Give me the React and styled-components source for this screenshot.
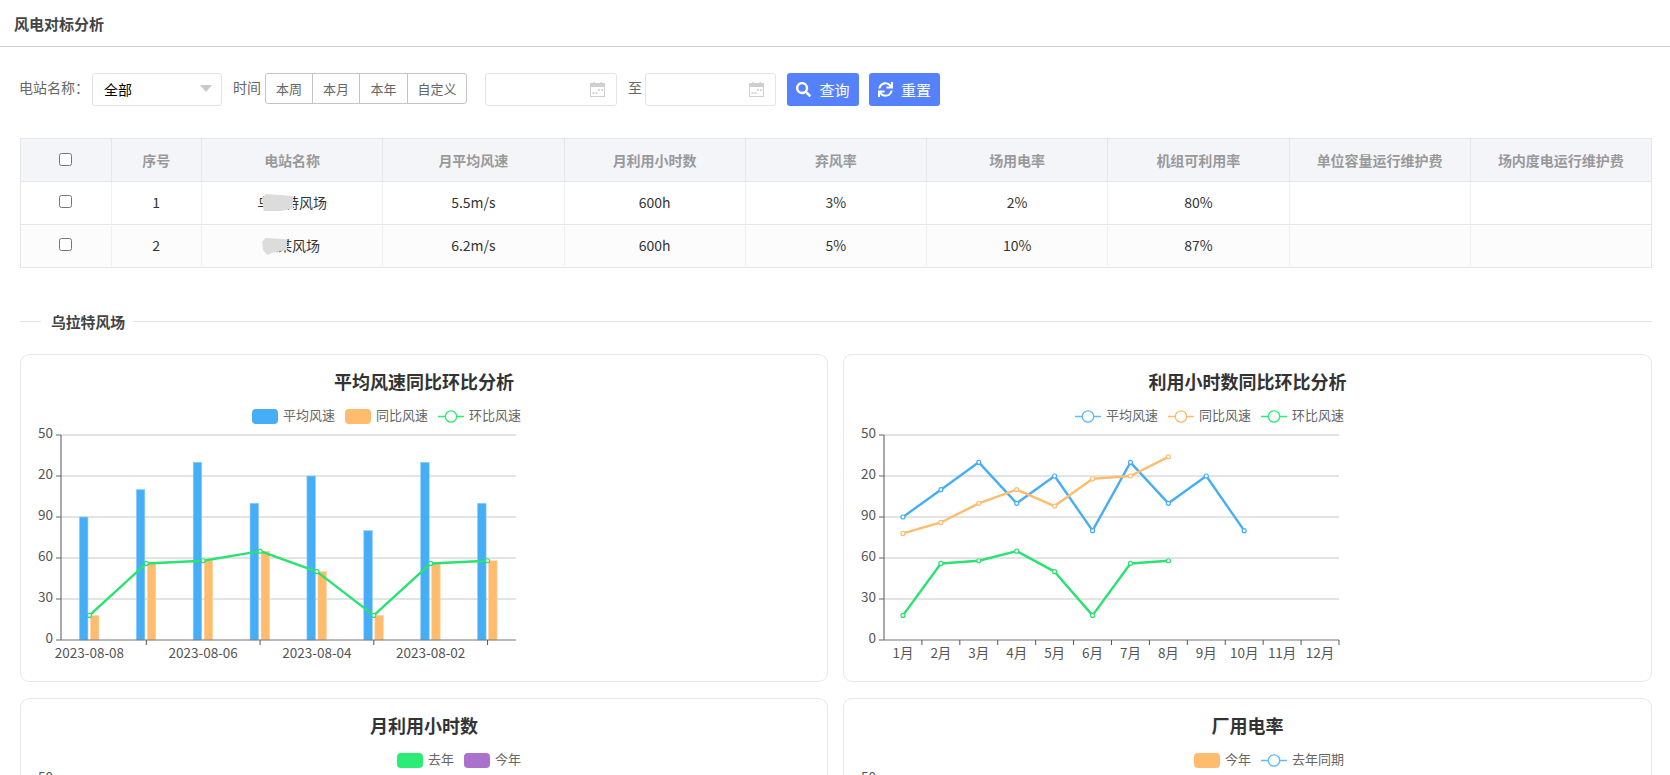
import React from "react";
import styled, { createGlobalStyle } from "styled-components";
import { FaSearch, FaSync } from "react-icons/fa";

const GlobalStyle = createGlobalStyle`
  html, body {
    margin: 0;
    padding: 0;
    height: 100%;
    overflow: hidden;
    background: #fff;
  }
  body {
    font-family: "Noto Sans CJK SC", "Noto Sans", sans-serif;
    color: #333;
  }
  * { box-sizing: border-box; }
`;

const Page = styled.div`
  width: 1670px;
  height: 775px;
  overflow: hidden;
`;

const Header = styled.div`
  height: 47px;
  padding-left: 14px;
  border-bottom: 1px solid #ccc;
  font-size: 15px;
  font-weight: 700;
  line-height: 48px;
  color: #444;
`;

const Content = styled.div`
  padding: 26px 18px 0 20px;
`;

const Filter = styled.div`
  display: flex;
  align-items: flex-start;
  height: 33px;
`;

const FilterLabel = styled.span`
  font-size: 14px;
  line-height: 28px;
  color: #666;
  margin-left: ${(p) => p.$left || 0}px;
  width: ${(p) => p.$width}px;
  flex: none;
`;

const Select = styled.div`
  width: 130px;
  height: 33px;
  padding: 0 9px 2px 11px;
  display: flex;
  align-items: center;
  justify-content: space-between;
  border: 1px solid #e4e4e4;
  border-radius: 3px;
  font-size: 14px;
  color: #000;
  flex: none;
`;

const Caret = styled.i`
  border-left: 6px solid transparent;
  border-right: 6px solid transparent;
  border-top: 7px solid #c8c8c8;
`;

const RangeGroup = styled.div`
  display: flex;
  height: 31px;
  border: 1px solid #c4c4c4;
  border-radius: 3px;
  flex: none;
`;

const RangeItem = styled.div`
  width: ${(p) => p.$width}px;
  text-align: center;
  font-size: 13px;
  line-height: 29px;
  color: #666;
  & + & {
    border-left: 1px solid #c4c4c4;
  }
`;

const DateBox = styled.div`
  width: ${(p) => p.$width}px;
  height: 33px;
  margin-left: ${(p) => p.$left || 0}px;
  padding-right: 11px;
  display: flex;
  align-items: center;
  justify-content: flex-end;
  border: 1px solid #e4e4e4;
  border-radius: 3px;
  flex: none;
`;

const ActionButton = styled.button`
  width: ${(p) => p.$width}px;
  height: 33px;
  margin-left: ${(p) => p.$left}px;
  display: flex;
  align-items: center;
  justify-content: center;
  gap: 8px;
  border: none;
  border-radius: 3px;
  background: #5582fc;
  color: #fff;
  font-family: inherit;
  font-size: 15px;
  padding: 0;
  flex: none;
  svg {
    font-size: 15px;
  }
`;

const Table = styled.table`
  width: 1632px;
  margin-top: 32px;
  table-layout: fixed;
  border-collapse: collapse;
  font-size: 14px;
`;

const HeadCell = styled.th`
  width: ${(p) => (p.$narrow ? "90.5px" : "auto")};
  height: 43px;
  padding: 0;
  background: #f4f5f9;
  border: 1px solid #e6e6e6;
  font-weight: 700;
  color: #999;
`;

const Row = styled.tr`
  background: ${(p) => (p.$alt ? "#fcfcfc" : "#fff")};
  border-top: 1px solid #e6e6e6;
  border-bottom: 1px solid #e6e6e6;
`;

const Cell = styled.td`
  height: 43px;
  padding: 0 0 2px;
  text-align: center;
  color: #333;
  border-left: 1px solid #f0f0f0;
  border-right: 1px solid #f0f0f0;
  &:first-child {
    border-left: 1px solid #e6e6e6;
  }
  &:last-child {
    border-right: 1px solid #e6e6e6;
  }
`;

const Check = styled.input.attrs({ type: "checkbox" })`
  margin: 0 0 4px;
  vertical-align: middle;
`;

const StationName = styled.span`
  position: relative;
  display: inline-block;
`;

const Smudge = styled.i`
  position: absolute;
  left: ${(p) => p.$left}px;
  top: ${(p) => p.$top}px;
  width: ${(p) => p.$width}px;
  height: ${(p) => p.$height}px;
  background: #dcdcdc;
  clip-path: ${(p) => p.$shape};
`;

const Section = styled.div`
  display: flex;
  align-items: center;
  margin-top: 43px;
  height: 20px;
  font-size: 14.8px;
  font-weight: 700;
  color: #444;
  &::before,
  &::after {
    content: "";
    height: 1px;
    background: #e4e4e4;
  }
  &::before {
    width: 21px;
    margin-right: 10px;
  }
  &::after {
    flex: 1;
    margin-left: 8px;
  }
`;

const ChartGrid = styled.div`
  display: grid;
  grid-template-columns: 808px 809px;
  gap: 16px 15px;
  margin-top: 23px;
`;

const Card = styled.div`
  height: 328px;
  border: 1px solid #e8e8e8;
  border-radius: 9px;
  overflow: hidden;
`;

const CardTitle = styled.div`
  height: 54px;
  line-height: 53px;
  text-align: center;
  font-size: 18px;
  font-weight: 700;
  color: #333;
`;

const Legend = styled.div`
  width: 500px;
  height: 15px;
  display: flex;
  justify-content: flex-end;
  align-items: center;
  gap: 10px;
`;

const LegendItem = styled.div`
  display: flex;
  align-items: center;
  gap: 5px;
  font-size: 13px;
  color: #666;
`;

const LegendText = styled.span`
  margin-bottom: 4px;
`;

const Swatch = styled.i`
  width: 26px;
  height: 15px;
  border-radius: 4px;
  background: ${(p) => p.$color};
`;

const PlotSvg = styled.svg`
  display: block;
  margin-top: -14px;
`;

const AxisText = styled.text`
  font-size: 13.5px;
  fill: #555;
`;

const CalendarIcon = () => (
  <svg width="15" height="15" viewBox="0 0 15 15">
    <rect x="0.5" y="1.5" width="14" height="13" fill="#fff" stroke="#cfcfcf" />
    <rect x="0.5" y="1.5" width="14" height="3.5" fill="#cfcfcf" />
    <rect x="3" y="0" width="1.5" height="3" fill="#cfcfcf" />
    <rect x="10.5" y="0" width="1.5" height="3" fill="#cfcfcf" />
    <rect x="8" y="7" width="2" height="2" fill="#d8d8d8" />
    <rect x="11" y="7" width="2" height="2" fill="#d8d8d8" />
    <rect x="2.5" y="10" width="2" height="2" fill="#d8d8d8" />
    <rect x="5.5" y="10" width="2" height="2" fill="#d8d8d8" />
  </svg>
);

const LineIcon = ({ color }) => (
  <svg width="26" height="15" viewBox="0 0 26 15">
    <line x1="0" y1="7.5" x2="26" y2="7.5" stroke={color} strokeWidth="1.5" />
    <circle cx="13" cy="7.5" r="5.7" fill="#fff" stroke={color} strokeWidth="1.3" />
  </svg>
);

const BLUE = "#46aef7";
const ORANGE = "#ffbc6e";
const GREEN = "#27e36f";
const MINT = "#2bed76";
const PURPLE = "#ab72cd";

const yTicks = [
  { label: "50", v: 150 },
  { label: "20", v: 120 },
  { label: "90", v: 90 },
  { label: "60", v: 60 },
  { label: "30", v: 30 },
  { label: "0", v: 0 },
];

const AXIS_X = 40;
const BASE_Y = 230;
const toY = (v) => BASE_Y - v * (205 / 150);

const Plot = ({ width, labels, shown, ticks, bars, lines }) => {
  const band = width / labels.length;
  const cx = (i) => AXIS_X + band * (i + 0.5);
  return (
    <PlotSvg width="560" height="264" viewBox="0 0 560 264">
      {yTicks.map((t) => (
        <g key={t.label}>
          <line x1={AXIS_X - 5} x2={AXIS_X} y1={toY(t.v)} y2={toY(t.v)} stroke="#666" />
          {t.v > 0 && (
            <line x1={AXIS_X} x2={AXIS_X + width} y1={toY(t.v)} y2={toY(t.v)} stroke="#c8c8c8" />
          )}
          <AxisText x={AXIS_X - 8} y={toY(t.v) + 3} textAnchor="end">
            {t.label}
          </AxisText>
        </g>
      ))}
      {bars &&
        bars.map((s, k) =>
          s.data.map((v, i) => (
            <rect
              key={`${k}-${i}`}
              x={cx(i) + (k === 0 ? -10 : 1)}
              y={toY(v)}
              width="8.5"
              height={BASE_Y - toY(v)}
              fill={s.color}
              stroke={s.edge}
              strokeWidth="0.6"
            />
          ))
        )}
      <line x1={AXIS_X} x2={AXIS_X} y1={toY(150)} y2={BASE_Y} stroke="#555" />
      <line x1={AXIS_X} x2={AXIS_X + width} y1={BASE_Y} y2={BASE_Y} stroke="#777" strokeWidth="1.2" />
      {ticks.map((t) => (
        <line key={t} x1={AXIS_X + band * t} x2={AXIS_X + band * t} y1={BASE_Y} y2={BASE_Y + 5} stroke="#555" />
      ))}
      {labels.map((l, i) =>
        shown(i) ? (
          <AxisText key={l} x={cx(i)} y={BASE_Y + 18} textAnchor="middle">
            {l}
          </AxisText>
        ) : null
      )}
      {lines.map((s) => (
        <g key={s.color}>
          <polyline
            points={s.data.map((v, i) => `${cx(i)},${toY(v)}`).join(" ")}
            fill="none"
            stroke={s.color}
            strokeWidth="2.4"
            strokeLinejoin="round"
          />
          {s.data.map((v, i) => (
            <circle key={i} cx={cx(i)} cy={toY(v)} r="2" fill="#fff" stroke={s.color} strokeWidth="1.2" />
          ))}
        </g>
      ))}
    </PlotSvg>
  );
};

const EmptyPlot = () => (
  <PlotSvg width="560" height="40" viewBox="0 0 560 40">
    <AxisText x={AXIS_X - 8} y="28" textAnchor="end">
      50
    </AxisText>
  </PlotSvg>
);

const windA = [90, 110, 130, 100, 120, 80, 130, 100];
const windB = [18, 56, 58, 65, 50, 18, 56, 58];
const dates = ["2023-08-08", "2023-08-07", "2023-08-06", "2023-08-05", "2023-08-04", "2023-08-03", "2023-08-02", "2023-08-01"];
const months = ["1月", "2月", "3月", "4月", "5月", "6月", "7月", "8月", "9月", "10月", "11月", "12月"];

const columns = ["序号", "电站名称", "月平均风速", "月利用小时数", "弃风率", "场用电率", "机组可利用率", "单位容量运行维护费", "场内度电运行维护费"];

const rows = [
  {
    id: 1,
    name: "乌拉特风场",
    smudge: { left: 5, top: 2, width: 31, height: 17, shape: "polygon(0 25%, 12% 0, 100% 12%, 100% 85%, 60% 100%, 5% 100%)" },
    vals: ["5.5m/s", "600h", "3%", "2%", "80%"],
  },
  {
    id: 2,
    name: "某某风场",
    smudge: { left: -2, top: 3, width: 25, height: 17, shape: "polygon(0 20%, 15% 0, 100% 8%, 100% 70%, 45% 85%, 20% 100%, 4% 70%)" },
    vals: ["6.2m/s", "600h", "5%", "10%", "87%"],
  },
];

const App = () => {
  return (
    <Page>
      <GlobalStyle />
      <Header>风电对标分析</Header>
      <Content>
        <Filter>
          <FilterLabel $left={-1} $width={73}>电站名称：</FilterLabel>
          <Select>
            全部
            <Caret />
          </Select>
          <FilterLabel $left={11} $width={32}>时间</FilterLabel>
          <RangeGroup>
            <RangeItem $width={46}>本周</RangeItem>
            <RangeItem $width={47}>本月</RangeItem>
            <RangeItem $width={48}>本年</RangeItem>
            <RangeItem $width={59}>自定义</RangeItem>
          </RangeGroup>
          <DateBox $left={18} $width={132}>
            <CalendarIcon />
          </DateBox>
          <FilterLabel $left={11} $width={17}>至</FilterLabel>
          <DateBox $width={131}>
            <CalendarIcon />
          </DateBox>
          <ActionButton $left={11} $width={72}>
            <FaSearch />
            查询
          </ActionButton>
          <ActionButton $left={10} $width={71}>
            <FaSync />
            重置
          </ActionButton>
        </Filter>

        <Table>
          <thead>
            <tr>
              <HeadCell $narrow>
                <Check />
              </HeadCell>
              {columns.map((c, i) => (
                <HeadCell key={c} $narrow={i === 0}>
                  {c}
                </HeadCell>
              ))}
            </tr>
          </thead>
          <tbody>
            {rows.map((r, i) => (
              <Row key={r.id} $alt={i === 1}>
                <Cell>
                  <Check />
                </Cell>
                <Cell>{r.id}</Cell>
                <Cell>
                  <StationName>
                    {r.name}
                    <Smudge
                      $left={r.smudge.left}
                      $top={r.smudge.top}
                      $width={r.smudge.width}
                      $height={r.smudge.height}
                      $shape={r.smudge.shape}
                    />
                  </StationName>
                </Cell>
                {r.vals.map((v, j) => (
                  <Cell key={j}>{v}</Cell>
                ))}
                <Cell />
                <Cell />
              </Row>
            ))}
          </tbody>
        </Table>

        <Section>乌拉特风场</Section>

        <ChartGrid>
          <Card>
            <CardTitle>平均风速同比环比分析</CardTitle>
            <Legend>
              <LegendItem><Swatch $color={BLUE} /><LegendText>平均风速</LegendText></LegendItem>
              <LegendItem><Swatch $color={ORANGE} /><LegendText>同比风速</LegendText></LegendItem>
              <LegendItem><LineIcon color={MINT} /><LegendText>环比风速</LegendText></LegendItem>
            </Legend>
            <Plot
              width={455}
              labels={dates}
              shown={(i) => i % 2 === 0}
              ticks={[1.5, 3.5, 5.5, 7.5]}
              bars={[
                { data: windA, color: BLUE, edge: "#8ccbf9" },
                { data: windB, color: ORANGE, edge: "#ffd5a3" },
              ]}
              lines={[{ data: windB, color: GREEN }]}
            />
          </Card>
          <Card>
            <CardTitle>利用小时数同比环比分析</CardTitle>
            <Legend>
              <LegendItem><LineIcon color="#5ebcfb" /><LegendText>平均风速</LegendText></LegendItem>
              <LegendItem><LineIcon color={ORANGE} /><LegendText>同比风速</LegendText></LegendItem>
              <LegendItem><LineIcon color={MINT} /><LegendText>环比风速</LegendText></LegendItem>
            </Legend>
            <Plot
              width={455}
              labels={months}
              shown={() => true}
              ticks={[1, 2, 3, 4, 5, 6, 7, 8, 9, 10, 11, 12]}
              lines={[
                { data: [90, 110, 130, 100, 120, 80, 130, 100, 120, 80], color: BLUE },
                { data: [78, 86, 100, 110, 98, 118, 120, 134], color: ORANGE },
                { data: windB, color: GREEN },
              ]}
            />
          </Card>
          <Card>
            <CardTitle>月利用小时数</CardTitle>
            <Legend>
              <LegendItem><Swatch $color={MINT} /><LegendText>去年</LegendText></LegendItem>
              <LegendItem><Swatch $color={PURPLE} /><LegendText>今年</LegendText></LegendItem>
            </Legend>
            <EmptyPlot />
          </Card>
          <Card>
            <CardTitle>厂用电率</CardTitle>
            <Legend>
              <LegendItem><Swatch $color={ORANGE} /><LegendText>今年</LegendText></LegendItem>
              <LegendItem><LineIcon color="#5ebcfb" /><LegendText>去年同期</LegendText></LegendItem>
            </Legend>
            <EmptyPlot />
          </Card>
        </ChartGrid>
      </Content>
    </Page>
  );
};

export default App;
